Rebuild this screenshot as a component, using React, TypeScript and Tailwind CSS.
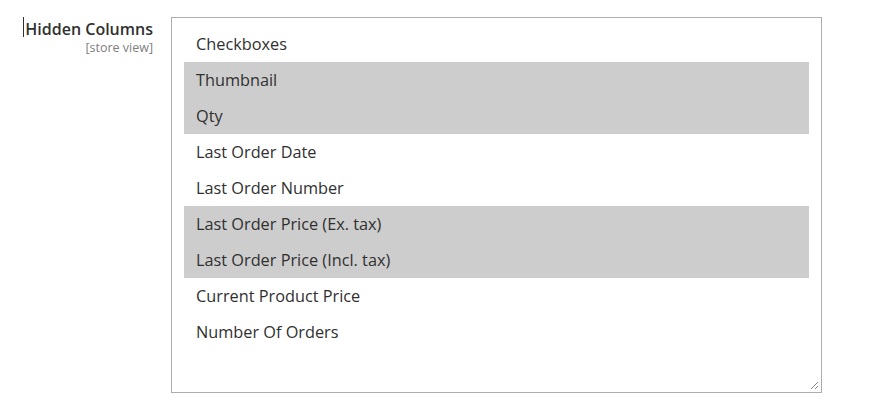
import React from "react";

const items = [
  { label: "Checkboxes", sel: false },
  { label: "Thumbnail", sel: true },
  { label: "Qty", sel: true },
  { label: "Last Order Date", sel: false },
  { label: "Last Order Number", sel: false },
  { label: "Last Order Price (Ex. tax)", sel: true },
  { label: "Last Order Price (Incl. tax)", sel: true },
  { label: "Current Product Price", sel: false },
  { label: "Number Of Orders", sel: false },
];

export default function App() {
  return (
    <div
      className="w-[890px] h-[406px] bg-white flex text-[#303030]"
      style={{ fontFamily: '"Open Sans", "Noto Sans", sans-serif' }}
    >
      <div className="w-[171px] shrink-0 pt-[19px] pr-[18px] flex flex-col items-end">
        <div className="relative text-[16px] font-semibold leading-[20px]">
          <span className="absolute left-[-2px] top-[-2px] w-[1px] h-[20px] bg-[#303030]" />
          Hidden Columns
        </div>
        <div className="text-[12.5px] leading-[15px] text-[#808080] mt-[1px]">[store view]</div>
      </div>
      <div className="mt-[17px] w-[651px] h-[376px] border border-[#adadad] pt-[8px] pl-[12px] pr-[12px] relative">
        {items.map((it) => (
          <div
            key={it.label}
            className={`h-[36px] flex items-center pl-[12px] text-[16.3px] ${it.sel ? "bg-[#cdcdcd]" : ""}`}
          >
            {it.label}
          </div>
        ))}
        <svg className="absolute right-[2px] bottom-[2px]" width="10" height="10" viewBox="0 0 10 10">
          <line x1="9" y1="2" x2="2" y2="9" stroke="#888" strokeWidth="1" />
          <line x1="9" y1="6" x2="6" y2="9" stroke="#888" strokeWidth="1" />
        </svg>
      </div>
    </div>
  );
}
